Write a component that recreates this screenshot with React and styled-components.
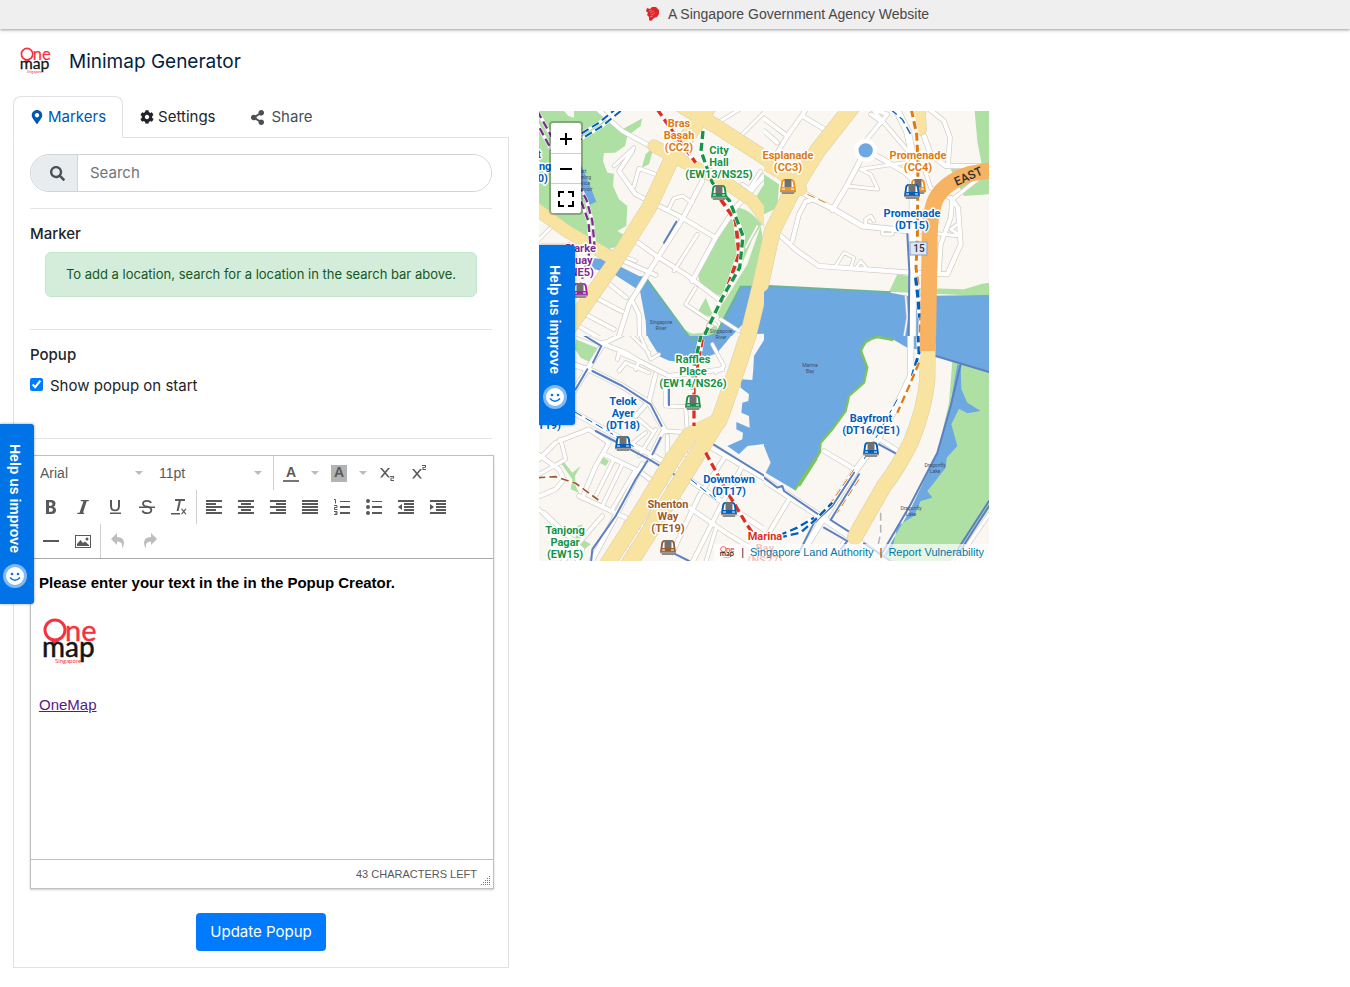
import React, { useState } from "react";
import styled, { createGlobalStyle } from "styled-components";
import { FaMapMarkerAlt, FaCog, FaShareAlt, FaSearch } from "react-icons/fa";

const GlobalStyle = createGlobalStyle`
  *, *::before, *::after {
    box-sizing: border-box;
  }

  body {
    margin: 0;
    background: #fff;
    color: #212529;
    font-family: Inter, "Liberation Sans", sans-serif;
    font-size: 15px;
    line-height: 24px;
  }
`;

/* ---------- map data ---------- */

const WATER = "#6ea8e0";
const PARK = "#aee0a4";
const YELLOW = "#f8e3a1";
const ORANGE = "#f7b262";
const BLUE_LINE = "#5d80c0";

const LINES = {
  red: "#dc3023",
  green: "#159447",
  blue: "#005ebd",
  orange: "#e07a10",
  purple: "#7b2d8e",
  brown: "#9b5a2e",
};

// Every tile is drawn on its own 675 unit grid
const tiles = [
  {
    id: "nw",
    x: 0,
    y: 0,
    parks: [
      "M0 0H180L250 55 310 22 305 45 265 75 258 105 228 125 195 126 192 150 205 185 225 188 222 225 240 265 265 285 262 345 235 360 265 378 262 400 185 420 0 300Z",
      "M345 105 330 160 308 170 320 130Z",
      "M590 290 480 470Q468 515 510 540L545 555 600 480 640 385 668 340Q630 290 590 290Z",
      "M640 275 675 220V320Z",
      "M665 345 625 460 560 565 535 600 545 640 605 528H645L675 400Z",
      "M475 605 500 560 525 620Z",
      "M425 650 460 668 500 665 530 640 540 665 485 690H450Z",
    ],
    land: ["M75 0H105V20L88 15Z"],
    water: [
      "M110 135 135 180 172 272 145 285 122 235 105 200Z",
      "M150 440 200 445 300 495 318 497 456 690H323L320 630 303 540 225 490 150 470Z",
      "M483 690 533 665 553 627 605 527H645V610L603 648 565 690Z",
      "M640 525H690V668L650 669Z",
    ],
    shore: ["M318 497 455 684M483 688 533 667 553 627 605 527H640"],
    major: [
      ["M-20 285 75 355 225 445", 36, YELLOW],
      ["M420 -20 530 45 700 155", 42, YELLOW],
      ["M345 105 420 145 560 215 640 270 690 335", 36, YELLOW],
      ["M515 -20 400 140 330 290 230 450 90 650", 44, YELLOW],
      ["M700 360 665 520 629 667 625 690", 47, YELLOW],
    ],
    roads: [
      ["M170 -10 250 60 350 115", 12],
      ["M280 120 240 180 290 250 360 285 430 320 530 380", 12],
      ["M225 165 285 110", 9],
      ["M285 225 300 172 350 190", 10],
      ["M390 292 405 262 430 255 460 275", 9],
      ["M490 210 430 325 350 450 270 580 235 690", 13],
      ["M675 195 590 290 530 380 460 510", 13],
      ["M475 370 405 480", 9],
      ["M290 390 360 440 440 490 540 565", 12],
      ["M255 450 350 492", 12],
      ["M545 30 610 -10M530 45 600 80 690 -10", 9],
      ["M620 250 665 180M640 240 610 220", 9],
      ["M470 530 440 580 530 640", 9],
      ["M200 510 262 560M170 560 250 602M130 605 225 655M110 640 180 680", 11],
      ["M280 570 300 610 302 690", 11],
      ["M0 385 45 340M90 400 55 430", 9],
      ["M545 625 600 660M215 420 290 450", 9],
      ["M655 345 620 410", 5],
    ],
    blue: ["M412 332 375 395"],
    rail: [
      ["M355 -5 400 60 470 155", LINES.red, 10],
      ["M545 265 590 330 600 430 560 545 510 640 488 690", LINES.red, 11],
      ["M492 60 486 120 520 215 572 270 612 375 602 470 550 560 500 665 490 690", LINES.green, 10],
      ["M-15 20 50 140 130 280 148 330 155 410 125 520", LINES.purple, 7],
      ["M-5 0 62 120 142 265 160 330 167 410", LINES.purple, 7],
      ["M235 -10 180 35 115 75M245 0 190 45 125 85", LINES.blue, 6],
    ],
  },
  {
    id: "ne",
    x: 225,
    y: 0,
    parks: [
      "M0 190 45 220 40 290 0 310Z",
      "M632 0H675V165L655 170 640 90Z",
      "M560 175 675 160V250L600 255Z",
      "M400 490 435 495 450 530 600 535 655 518 675 515V556L375 542Z",
    ],
    land: [],
    water: ["M0 524 380 545 430 555 675 552V675H0Z"],
    shore: ["M0 524 380 544"],
    major: [
      ["M-30 140 50 185 110 235", 36, YELLOW],
      ["M465 -20 470 55", 34, YELLOW],
      ["M270 -20 160 120 80 250 25 360 -10 520", 47, YELLOW],
    ],
    roads: [
      ["M-10 15 70 75 130 -10M70 75 40 125M115 15 190 60M0 60 40 95", 12],
      ["M305 90 370 10 325 -5M320 10 350 30M330 0 440 130", 11],
      ["M400 0 430 60 447 140 445 690", 20],
      ["M330 130 420 182 445 205M290 145 250 222 205 297", 14],
      ["M250 225 342 235 320 190 290 175 420 155", 9],
      ["M108 240 150 265 210 295 295 345 435 360", 15],
      ["M435 360 590 375 560 355 580 340", 9],
      ["M305 340 305 325 320 315 330 330", 9],
      ["M355 355 355 370 385 370 388 350", 8],
      ["M150 265 125 272 105 310 85 390", 12],
      ["M45 370 100 420 165 465 440 485 550 490 590 400 582 290 560 260", 13],
      ["M480 75 500 130 545 165 650 165", 14],
      ["M490 -10 540 30 558 80 552 160", 12],
      ["M480 170 500 230 565 265 660 190", 10],
      ["M565 265 560 320 530 400 525 480", 12],
      ["M215 465 240 425 270 440 262 465M280 465 290 450 305 468", 8],
      ["M425 555 430 620 420 680", 3],
    ],
    blue: ["M430 370 436 480 434 690"],
    rail: [
      ["M442 -5 458 70 462 150 460 380 456 470 462 520 470 620 468 690", LINES.orange, 9],
      ["M380 -5 415 25 440 70", LINES.blue, 4],
      ["M455 500 462 560 467 620", LINES.blue, 10],
      ["M130 250 185 275", LINES.orange, 3],
    ],
    express: [["M700 175 620 188Q540 215 515 265 495 310 497 400L492 690", 48, ORANGE]],
    pond: [305, 118, 21],
  },
  {
    id: "sw",
    x: 0,
    y: 225,
    parks: [
      "M110 10 180 38 160 82 125 65 108 40Z",
      "M190 362 210 375 200 390 182 380Z",
      "M70 372 100 410 125 390 108 420 110 450 120 470 95 460 100 430 65 380Z",
      "M115 570 130 565 130 610 155 625 130 645 105 635Z",
      "M450 -5H500L490 12 465 12Z",
      "M605 410 615 425 590 450 575 490 555 488 570 430Z",
    ],
    land: [],
    water: [
      "M323 -5 333 14 363 62 390 74 423 78 480 72 533 52 560 20 580 -5Z",
      "M690 -10 675 12 645 60 643 98 640 132 605 130 605 155 630 175 628 195 610 200 607 230 630 240 632 275 592 258 592 280 612 290 610 310 565 330 600 355 625 330 690 322Z",
    ],
    shore: ["M452 5Q470 16 488 8"],
    major: [
      ["M633 -20 590 110 545 240 500 315 440 410 330 590 260 700", 48, YELLOW],
      ["M540 255 450 298 400 370 310 520 195 700", 46, YELLOW],
    ],
    roads: [
      ["M105 -10 260 50 300 75 390 120 550 100M190 25 250 -5", 12],
      ["M235 70 240 50 300 75 290 100M240 105 260 80 330 110", 10],
      ["M270 -10 330 50M300 -10 335 70 360 55", 8],
      ["M110 88 160 105 250 150 330 200 378 285", 15],
      ["M350 115 330 195 290 240", 12],
      ["M105 165 145 100 195 20", 14],
      ["M380 130 380 210 440 212 445 290", 10],
      ["M520 25 555 90 530 110", 9],
      ["M105 230 250 310 400 390 470 445 690 590", 14],
      ["M60 315 150 280 210 320 170 390 130 485", 12],
      ["M-10 350 60 400 75 430 50 460 -10 485M0 370 50 320", 12],
      ["M0 415 80 370 65 310", 10],
      ["M120 480 260 545 350 590", 12],
      ["M195 355 300 405 400 480 560 590 690 670", 12],
      ["M250 385 190 510M290 400 220 520M225 370 170 480", 10],
      ["M310 385 230 540 150 690", 14],
      ["M370 290 330 370M378 285 445 290M385 300 385 365M430 345 465 375", 11],
      ["M300 360 350 280M270 330 320 290M300 250 340 285", 9],
      ["M500 325 690 435", 13],
      ["M560 360 480 480 400 650M610 390 540 520 460 680", 12],
      ["M260 560 320 600M240 620 300 660M380 450 260 690", 9],
      ["M15 530 130 640 110 690M60 690 190 540", 11],
      ["M0 520 40 560M530 580 500 680", 10],
    ],
    blue: [
      "M130 -5 187 30 162 80",
      "M160 105 250 150 335 205 368 270",
      "M145 100 110 160M365 305 340 355",
      "M170 285 330 370 410 418",
      "M325 375 290 430 230 540 160 640 155 690",
      "M515 320 690 428",
      "M390 160 390 208",
      "M400 650 450 675",
    ],
    rail: [
      ["M490 10 475 90 465 150 465 270M500 350 560 460 620 560 640 590", LINES.red, 10],
      ["M487 -5 465 90 458 170", LINES.green, 10],
      ["M-5 425 50 422 110 442 178 492", LINES.brown, 5],
      ["M108 228 290 335M455 430 530 490", LINES.blue, 3],
    ],
  },
  {
    id: "se",
    x: 225,
    y: 225,
    parks: ["M565 75 690 112V500L560 675H350L440 520 520 350 555 200Z"],
    land: ["M690 515 590 675H690Z"],
    water: [
      "M0 0H345L310 15 292 45 310 95 300 140 255 180 245 225 205 280 170 320 165 360 92 462 5 410 20 380 0 330Z",
      "M340 0 390 12 430 35 470 42 520 60 675 108V0Z",
      "M580 85 590 88 592 160 610 200 650 225 610 232 585 218 562 265 580 330 548 365 545 395 510 440 490 465 505 485 470 495 450 540 400 570 385 640 350 675 440 520 520 350 560 200Z",
    ],
    major: [["M491 25 490 130Q482 220 440 320 400 400 360 450L273 602", 45, YELLOW]],
    roads: [
      ["M-10 425 190 555 390 690", 18],
      ["M75 490 15 590M180 345 275 402M345 308 402 345", 12],
      ["M440 -10 440 120 390 225 330 330 270 410 170 560 90 690", 17],
      ["M240 620 210 680", 14],
      ["M675 535 575 680", 10],
    ],
    blue: [
      "M515 60 675 108",
      "M590 85 560 210 520 350 440 505 355 650",
      "M345 325 400 355",
      "M0 425 40 455 55 450 60 465 170 540",
      "M270 410 205 510 150 560 105 650",
      "M285 415 200 552 255 587",
      "M180 575 250 615 230 640",
      "M300 622 380 675",
      "M675 495 575 650M675 510 585 650",
    ],
    coast: ["M340 3 388 12M340 3Q300 10 291 45L310 95 300 140 255 180 245 225 205 280 170 320 167 350 92 462M158 368 105 450"],
    rail: [
      ["M462 -5 465 50 445 120", LINES.blue, 9],
      ["M465 80 440 140 400 230", LINES.orange, 7],
      ["M400 190 300 370", LINES.blue, 3],
      ["M270 400 205 495M285 430 220 530", LINES.orange, 3],
      ["M45 605 110 590 155 550 205 500M45 598 100 575 150 545", LINES.blue, 7],
      ["M350 530V590L340 640", "#b5b5b5", 5],
    ],
    express: [["M492 -20 491 45", 48, ORANGE, "butt"]],
  },
];

const stations = [
  { x: 180, y: 81, color: LINES.green },
  { x: 41, y: 179, color: "#a51fb0" },
  { x: 249, y: 75, color: "#f2941e" },
  { x: 379, y: 75, color: "#f2941e" },
  { x: 373, y: 80, color: LINES.blue },
  { x: 332, y: 338, color: LINES.blue },
  { x: 154, y: 291, color: LINES.green },
  { x: 84, y: 332, color: LINES.blue },
  { x: 190, y: 398, color: LINES.blue },
  { x: 129, y: 436, color: LINES.brown },
];

const placeLabels = [
  { x: 140, y: 16, color: LINES.orange, lines: ["Bras", "Basah", "(CC2)"] },
  { x: 180, y: 43, color: LINES.green, lines: ["City", "Hall", "(EW13/NS25)"] },
  { x: 249, y: 48, color: LINES.orange, lines: ["Esplanade", "(CC3)"] },
  { x: 379, y: 48, color: LINES.orange, lines: ["Promenade", "(CC4)"] },
  { x: 373, y: 106, color: LINES.blue, lines: ["Promenade", "(DT15)"] },
  { x: -8, y: 47, color: LINES.blue, lines: ["Fort", "Canning", "(DT20)"] },
  { x: 41, y: 141, color: LINES.purple, lines: ["Clarke", "Quay", "(NE5)"] },
  { x: 154, y: 252, color: LINES.green, lines: ["Raffles", "Place", "(EW14/NS26)"] },
  { x: 84, y: 294, color: LINES.blue, lines: ["Telok", "Ayer", "(DT18)"] },
  { x: 5, y: 318, color: LINES.blue, lines: ["(DT19)"] },
  { x: 190, y: 372, color: LINES.blue, lines: ["Downtown", "(DT17)"] },
  { x: 129, y: 397, color: LINES.brown, lines: ["Shenton", "Way", "(TE19)"] },
  { x: 26, y: 423, color: LINES.green, lines: ["Tanjong", "Pagar", "(EW15)"] },
  { x: 226, y: 429, color: LINES.red, lines: ["Marina", "Bay", "(NS27)"] },
  { x: 332, y: 311, color: LINES.blue, lines: ["Bayfront", "(DT16/CE1)"] },
];

const waterLabels = [
  { x: 122, y: 213, lines: ["Singapore", "River"] },
  { x: 182, y: 222, lines: ["Singapore", "River"] },
  { x: 271, y: 256, lines: ["Marina", "Bay"] },
  { x: 396, y: 356, lines: ["Dragonfly", "Lake"] },
  { x: 372, y: 399, lines: ["Dragonfly", "Lake"] },
  { x: 43, y: 62, lines: ["Fort", "Canning", "Service", "Reservoir"] },
];

/* ---------- drawings ---------- */

const OneMapLogo = ({ size }) => (
  <svg width={size} height={size} viewBox="0 0 60 60" role="img" aria-label="OneMap logo">
    <circle cx="16" cy="16" r="10" fill="none" stroke="#f5333f" strokeWidth="3" />
    <path d="M9 23 16 32 23 23Q16 28 9 23Z" fill="#f5333f" />
    <text x="26" y="27" fontFamily="Lato" fontSize="29" fill="#f5333f" stroke="#f5333f" strokeWidth="0.4">ne</text>
    <text x="3" y="43" fontFamily="Lato" fontSize="28" fill="#151515" stroke="#151515" strokeWidth="0.5">map</text>
    <text x="16" y="49" fontFamily="Lato" fontSize="6" fill="#f5333f">Singapore</text>
  </svg>
);

const LionIcon = () => (
  <svg width="14" height="16" viewBox="0 0 14 16" aria-hidden="true">
    <path
      d="M1 2 4 3 6 1 10 1 13 4 13 8 11 11 8 12 5 15 3 14 3 11 1 9 2 7 0 5Z"
      fill="#e0242b"
    />
    <path d="M3 5 6 4M4 7 8 5M5 9 9 7M4 11 7 10" stroke="#f08a8a" strokeWidth="0.7" fill="none" />
  </svg>
);

const SmileIcon = () => (
  <svg width="24" height="24" viewBox="0 0 24 24" aria-hidden="true">
    <circle cx="12" cy="12" r="12" fill="#fff" fillOpacity="0.5" />
    <circle cx="12" cy="12" r="9" fill="#fff" />
    <circle cx="9" cy="10" r="1.3" fill="#0073e6" />
    <circle cx="15" cy="10" r="1.3" fill="#0073e6" />
    <path d="M7 13.5Q12 19 17 13.5" fill="none" stroke="#0073e6" strokeWidth="1.5" />
  </svg>
);

const Train = ({ x, y, color }) => (
  <g transform={`translate(${x - 8} ${y - 7})`}>
    <path d="M1 11 2 15H14L15 11Z" fill="#8a8a8a" />
    <path d="M0 12 1 5Q1 0 5 0H11Q15 0 15 5L16 12Z" fill={color} />
    <path d="M2.500 8 3 4Q3 1.500 5 1.500H11Q13 1.500 13 4L13.500 8Z" fill="#fff" />
    <path d="M4.500 0H11.500V8H4.500Z" fill="#707070" />
    <path d="M2 10H5M11 10H14" stroke="#fff" />
    <path d="M0 12.500H16" stroke="#9a9a9a" strokeWidth="1.5" />
  </g>
);

const Tile = ({ x, y, parks, land, water, major, roads, blue, rail, coast = [], shore = [], express = [], pond }) => (
  <svg x={x} y={y} width="225" height="225" viewBox="0 0 675 675" fill="none">
    {parks.map((d) => <path key={d} d={d} fill={PARK} />)}
    {land.map((d) => <path key={d} d={d} fill="#faf7f2" />)}
    {water.map((d) => <path key={d} d={d} fill={WATER} />)}
    {coast.map((d) => <path key={d} d={d} stroke="#7fc35c" strokeWidth="7" />)}
    {shore.map((d) => <path key={d} d={d} stroke="#68b59c" strokeWidth="6" />)}
    <g strokeLinejoin="round" strokeLinecap="round">
      {roads.map(([d, w]) => <path key={d} d={d} stroke="#cfcbc5" strokeWidth={w + 4} />)}
      {roads.map(([d, w]) => <path key={d} d={d} stroke="#fff" strokeWidth={w} />)}
      {blue.map((d) => <path key={d} d={d} stroke={BLUE_LINE} strokeWidth="6" />)}
      {major.map(([d, w]) => <path key={d} d={d} stroke="#dccfa6" strokeWidth={w + 3} />)}
      {major.map(([d, w, c]) => <path key={d} d={d} stroke={c} strokeWidth={w} />)}
      {pond && <circle cx={pond[0]} cy={pond[1]} r={pond[2] + 7} fill={WATER} stroke="#fff" strokeWidth="13" />}
    </g>
    {rail.map(([d, c, w]) => (
      <g key={d}>
        <path d={d} stroke="#fff" strokeWidth={w + 3} />
        <path d={d} stroke={c} strokeWidth={w} strokeDasharray="24 12" />
      </g>
    ))}
    {express.map(([d, w, c, cap]) => (
      <path key={d} d={d} stroke={c} strokeWidth={w} strokeLinecap={cap || "round"} />
    ))}
  </svg>
);

const MapCanvas = () => (
  <MapDrawing viewBox="0 0 450 450" role="img" aria-label="Map of Marina Bay">
    <rect width="450" height="450" fill="#faf7f2" />
    {tiles.map((tile) => <Tile key={tile.id} {...tile} />)}
    {stations.map((s) => <Train key={`${s.x}-${s.y}`} {...s} />)}
    {waterLabels.map(({ x, y, lines }) => (
      <WaterLabel key={`${x}-${y}`}>
        {lines.map((line, i) => <tspan key={line} x={x} y={y + i * 6}>{line}</tspan>)}
      </WaterLabel>
    ))}
    {placeLabels.map(({ x, y, color, lines }) => (
      <PlaceLabel key={`${x}-${y}`} $color={color}>
        {lines.map((line, i) => <tspan key={line} x={x} y={y + i * 12}>{line}</tspan>)}
      </PlaceLabel>
    ))}
    <rect x="371" y="131" width="17" height="13" fill="#dde6f7" stroke="#8f9db8" />
    <RoadLabel x="380" y="141">15</RoadLabel>
    <RoadLabel $large transform="translate(431 69) rotate(-24)">EAST</RoadLabel>
  </MapDrawing>
);

/* ---------- editor icons, 16px grid ---------- */

const barIcon = (rows) => (
  <path d={rows.map(([x, w], i) => `M${x} ${i * 3 + 1}h${w}v2h-${w}z`).join("")} shapeRendering="crispEdges" />
);

const icons = {
  bold: <path fillRule="evenodd" d="M3 1H8Q12.500 1 12.500 4.500 12.500 7 10.500 7.700 13 8.500 13 11 13 15 8.500 15H3ZM6 3.300V6.700H7.800Q9.500 6.700 9.500 5 9.500 3.300 7.800 3.300ZM6 9V12.700H8Q10 12.700 10 10.800 10 9 8 9Z" />,
  italic: <path d="M6 1H14L13.500 2.300H11.700L8 13.700H9.500L9 15H2L2.500 13.700H4.500L8.500 2.300H5.500Z" />,
  underline: <path d="M3 1H5V7Q5 10.500 8 10.500 11 10.500 11 7V1H13V7Q13 12.300 8 12.300 3 12.300 3 7ZM3 13.500H14V15H3Z" />,
  strike: (
    <>
      <path d="M12 4Q11.500 1.800 8 1.800 4 1.800 4 4.500 4 7 8 7.700 12.300 8.500 12.300 11 12.300 14.200 8 14.200 4 14.200 3.500 11.500" fill="none" stroke="currentColor" strokeWidth="1.8" />
      <path d="M0 7.500H16V9H0Z" />
    </>
  ),
  clear: <path d="M4 0H14V2H9.800L7.600 12H5.600L7.800 2H4ZM0 14H9V15.500H0ZM10 10 11 9.500 12.700 11.500 14.500 9.500 15.500 10 13.500 12.500 15.500 15 14.500 15.500 12.700 13.500 11 15.500 10 15 12 12.500Z" />,
  left: barIcon([[0, 16], [0, 10], [0, 16], [0, 10], [0, 16]]),
  center: barIcon([[0, 16], [3, 10], [0, 16], [3, 10], [0, 16]]),
  right: barIcon([[0, 16], [6, 10], [0, 16], [6, 10], [0, 16]]),
  justify: barIcon([[0, 16], [0, 16], [0, 16], [0, 16], [0, 16]]),
  numbered: (
    <>
      <path d="M6 2h10v1H6zM6 7h10v2H6zM6 13h10v2H6z" shapeRendering="crispEdges" />
      <path d="M0 .5H1.500V4.500M0 6.500H3V8.500H.500V10.500H3.500M0 12.500H3V15.500H0M1 14H3" fill="none" stroke="currentColor" />
    </>
  ),
  bullets: (
    <>
      <path d="M6 2h10v1H6zM6 7h10v2H6zM6 13h10v2H6z" shapeRendering="crispEdges" />
      <circle cx="2" cy="2" r="2" />
      <circle cx="2" cy="8" r="2" />
      <circle cx="2" cy="14" r="2" />
    </>
  ),
  outdent: (
    <>
      {barIcon([[0, 16], [6, 10], [6, 10], [6, 10], [0, 16]])}
      <path d="M4 5V11L0 8Z" />
    </>
  ),
  indent: (
    <>
      {barIcon([[0, 16], [6, 10], [6, 10], [6, 10], [0, 16]])}
      <path d="M0 5V11L4 8Z" />
    </>
  ),
  rule: <path d="M0 7h16v2H0z" />,
  image: <path fillRule="evenodd" d="M0 2H16V15H0ZM1 3V14H15V3ZM2 13V11L5.500 7 8 10 10 8.500 14 12V13ZM12 4.500A1.500 1.500 0 1 0 12 7.500 1.500 1.500 0 0 0 12 4.500Z" />,
  undo: <path d="M1 6 7 0V4Q14 4 14 10 14 13 12 15.500 13.500 8.500 7 8.500V12Z" />,
  redo: <path d="M15 6 9 0V4Q2 4 2 10 2 13 4 15.500 2.500 8.500 9 8.500V12Z" />,
  sub: <path d="M1 3H3L6 6.500 9 3H11L7 7.700 11 12.500H9L6 9 3 12.500H1L5 7.700ZM11 11H15V13.500H12.500V15H15V16H11.500V12.700H14V12H11Z" />,
  sup: <path d="M1 4H3L6 7.500 9 4H11L7 8.700 11 13.500H9L6 10 3 13.500H1L5 8.700ZM11 0H15V2.800H12.500V4H15V5H11.500V2H14V1H11Z" />,
};

const formatTools = [
  ["bold", "Bold"],
  ["italic", "Italic"],
  ["underline", "Underline"],
  ["strike", "Strikethrough"],
  ["clear", "Clear formatting"],
];

const paragraphTools = [
  ["left", "Align left"],
  ["center", "Align center"],
  ["right", "Align right"],
  ["justify", "Justify"],
  ["numbered", "Numbered list"],
  ["bullets", "Bullet list"],
  ["outdent", "Decrease indent"],
  ["indent", "Increase indent"],
];

const Icon = ({ name }) => (
  <svg width="16" height="16" viewBox="0 0 16 16" fill="currentColor" aria-hidden="true">{icons[name]}</svg>
);

const Caret = () => (
  <svg width="8" height="4" viewBox="0 0 8 4" aria-hidden="true">
    <path d="M0 0H8L4 4Z" fill="#b5bcc2" />
  </svg>
);

const ToolButtons = ({ tools, disabled }) =>
  tools.map(([name, label]) => (
    <ToolButton key={name} type="button" aria-label={label} disabled={disabled}>
      <Icon name={name} />
    </ToolButton>
  ));

const HelpTab = ({ inMap }) => (
  <HelpButton type="button" $inMap={inMap}>
    <span>Help us improve</span>
    <SmileIcon />
  </HelpButton>
);

const Editor = () => (
  <EditorBox>
    <Toolbar>
      <ToolRow>
        <ToolGroup $spaced>
          <SelectBox>
            <select aria-label="Font family" defaultValue="Arial">
              <option>Arial</option>
              <option>Georgia</option>
            </select>
            <Caret />
          </SelectBox>
          <SelectBox>
            <select aria-label="Font size" defaultValue="11pt">
              <option>11pt</option>
              <option>12pt</option>
            </select>
            <Caret />
          </SelectBox>
        </ToolGroup>
        <ToolGroup $spaced>
          <SplitTool>
            <ToolButton type="button" aria-label="Text color"><ColorLetter>A</ColorLetter></ToolButton>
            <CaretButton type="button" aria-label="Pick text color"><Caret /></CaretButton>
          </SplitTool>
          <SplitTool>
            <ToolButton type="button" aria-label="Background color"><ColorLetter $filled>A</ColorLetter></ToolButton>
            <CaretButton type="button" aria-label="Pick background color"><Caret /></CaretButton>
          </SplitTool>
          <SplitTool>
            <ToolButtons tools={[["sub", "Subscript"], ["sup", "Superscript"]]} />
          </SplitTool>
        </ToolGroup>
      </ToolRow>
      <ToolRow>
        <ToolGroup><ToolButtons tools={formatTools} /></ToolGroup>
        <ToolGroup><ToolButtons tools={paragraphTools} /></ToolGroup>
      </ToolRow>
      <ToolRow>
        <ToolGroup><ToolButtons tools={[["rule", "Horizontal line"], ["image", "Insert image"]]} /></ToolGroup>
        <ToolGroup><ToolButtons tools={[["undo", "Undo"], ["redo", "Redo"]]} disabled /></ToolGroup>
      </ToolRow>
    </Toolbar>
    <EditArea role="textbox" aria-label="Popup text" aria-multiline="true" contentEditable suppressContentEditableWarning spellCheck={false}>
      <p><strong>Please enter your text in the in the Popup Creator.</strong></p>
      <p><OneMapLogo size={60} /></p>
      <p><a href="#onemap">OneMap</a></p>
    </EditArea>
    <StatusBar>
      <span>43 CHARACTERS LEFT</span>
      <svg width="10" height="10" viewBox="0 0 10 10" aria-hidden="true">
        <path
          d="M8 1h2M6 3h4M4 5h6M2 7h8M0 9h10"
          stroke="#777"
          strokeDasharray="1 1"
          shapeRendering="crispEdges"
        />
      </svg>
    </StatusBar>
  </EditorBox>
);

const App = () => {
  const [showPopup, setShowPopup] = useState(true);

  return (
    <>
      <GlobalStyle />
      <TopBar>
        <TopBarText>
          <LionIcon />
          <span>A Singapore Government Agency Website</span>
        </TopBarText>
      </TopBar>
      <HelpTab />
      <Header>
        <OneMapLogo size={34} />
        <h1>Minimap Generator</h1>
      </Header>
      <Main>
        <section>
          <Tabs>
            <Tab href="#markers" $active><FaMapMarkerAlt size={14} /> Markers</Tab>
            <Tab href="#settings" $dark><FaCog size={14} /> Settings</Tab>
            <Tab href="#share" $wide><FaShareAlt size={15} /> Share</Tab>
          </Tabs>
          <Panel>
            <SearchBar>
              <label htmlFor="search"><FaSearch size={15} title="Search" /></label>
              <input id="search" type="text" placeholder="Search" />
            </SearchBar>
            <Divider />
            <SectionTitle>Marker</SectionTitle>
            <Notice>To add a location, search for a location in the search bar above.</Notice>
            <Divider />
            <SectionTitle>Popup</SectionTitle>
            <CheckLabel>
              <input type="checkbox" checked={showPopup} onChange={(e) => setShowPopup(e.target.checked)} />
              Show popup on start
            </CheckLabel>
            <Divider />
            <Editor />
            <UpdateButton type="button">Update Popup</UpdateButton>
          </Panel>
        </section>
        <MapFrame>
          <MapCanvas />
          <HelpTab inMap />
          <ZoomControl>
            <button type="button" aria-label="Zoom in">
              <svg width="12" height="12" viewBox="0 0 12 12"><path d="M5 0h2v5h5v2H7v5H5V7H0V5h5z" /></svg>
            </button>
            <button type="button" aria-label="Zoom out">
              <svg width="12" height="12" viewBox="0 0 12 12"><path d="M0 5h12v2H0z" /></svg>
            </button>
            <button type="button" aria-label="Full screen">
              <svg width="16" height="16" viewBox="0 0 16 16">
                <path d="M1 6V1H6M10 1H15V6M15 10V15H10M6 15H1V10" fill="none" stroke="#000" strokeWidth="2" />
              </svg>
            </button>
          </ZoomControl>
          <Attribution>
            <OneMapLogo size={16} />
            <span>|</span>
            <a href="#sla">Singapore Land Authority</a>
            <span>|</span>
            <a href="#report">Report Vulnerability</a>
          </Attribution>
        </MapFrame>
      </Main>
    </>
  );
};

/* ---------- styles ---------- */

const TopBar = styled.div`
  display: grid;
  grid-template-columns: 2fr 10fr;
  height: 29px;
  padding-bottom: 2px;
  background: #efefef;
  box-shadow: 0 1px 3px rgba(0, 0, 0, 0.4);
`;

const TopBarText = styled.div`
  grid-column: 2;
  display: flex;
  align-items: center;
  justify-content: center;
  gap: 8px;
  color: #484848;
  font-family: "Liberation Sans", Arial, sans-serif;
  font-size: 14px;
`;

const Header = styled.header`
  display: flex;
  align-items: center;
  gap: 17px;
  height: 67px;
  padding: 0 18px 2px;

  h1 {
    margin: 0;
    color: #041e42;
    font-size: 19px;
    font-weight: 400;
  }
`;

const Main = styled.main`
  display: grid;
  grid-template-columns: minmax(0, 496px) minmax(0, 450px);
  align-items: start;
  gap: 30px;
  padding: 0 13px 19px;
`;

const Tabs = styled.nav`
  display: flex;
`;

const Tab = styled.a`
  position: relative;
  display: flex;
  align-items: center;
  gap: ${({ $wide }) => ($wide ? "7px" : "4px")};
  height: 42px;
  margin-bottom: -1px;
  padding: 0 16px;
  border: 1px solid;
  border-color: ${({ $active }) => ($active ? "#dee2e6 #dee2e6 #fff" : "transparent")};
  border-radius: 8px 8px 0 0;
  background: ${({ $active }) => ($active ? "#fff" : "none")};
  color: ${({ $active, $dark }) => ($active ? "#0056b3" : $dark ? "#212529" : "#495057")};
  text-decoration: none;
`;

const Panel = styled.div`
  padding: 16px;
  border: 1px solid #dee2e6;
`;

const SearchBar = styled.div`
  display: flex;
  height: 38px;
  border: 1px solid #ced4da;
  border-radius: 19px;
  overflow: hidden;

  label {
    display: flex;
    align-items: center;
    justify-content: center;
    width: 47px;
    padding-left: 7px;
    border-right: 1px solid #ced4da;
    background: #e9ecef;
    color: #495057;
  }

  input {
    flex: 1;
    min-width: 0;
    padding: 0 12px;
    border: 0;
    outline: 0;
    font: inherit;
  }

  input::placeholder {
    color: #6c757d;
  }
`;

const Divider = styled.hr`
  margin: 16px 0 13px;
  border: 0;
  border-top: 1px solid #e3e4e5;
`;

const SectionTitle = styled.h2`
  margin: 0;
  font-size: 15px;
  font-weight: 500;
`;

const Notice = styled.div`
  margin: 6px 15px 32px;
  padding: 10px 12px;
  border: 1px solid #c3e6cb;
  border-radius: 6px;
  background: #d4edda;
  color: #155724;
  font-size: 13px;
  line-height: 23px;
  text-align: center;
`;

const CheckLabel = styled.label`
  display: flex;
  align-items: center;
  gap: 7px;
  margin: 7px 0 40px;

  input {
    width: 13px;
    height: 13px;
    margin: 0 0 3px;
    accent-color: #007bff;
  }
`;

const EditorBox = styled.div`
  margin: 16px -2px 24px 0;
  border: 1px solid #c0c0c0;
  box-shadow: 0 1px 2px rgba(0, 0, 0, 0.2);
  background: #fff;
  color: #595959;
  font-family: "Liberation Sans", Arial, sans-serif;
`;

const Toolbar = styled.div`
  border-bottom: 1px solid #a8a8a8;
`;

const ToolRow = styled.div`
  display: flex;
  height: 34px;
  padding-left: 3px;
`;

const ToolGroup = styled.div`
  display: flex;
  align-items: center;
  gap: ${({ $spaced }) => ($spaced ? "1px" : "0")};
  padding: 0 1px;

  & + & {
    border-left: 1px solid #d0d0d0;
  }
`;

const ToolButton = styled.button`
  display: flex;
  align-items: center;
  justify-content: center;
  width: 32px;
  height: 30px;
  padding: 0;
  border: 0;
  background: none;
  color: ${({ disabled }) => (disabled ? "#bdbdbd" : "#595959")};
  font-family: inherit;
`;

const CaretButton = styled(ToolButton)`
  width: 15px;
`;

const SplitTool = styled.div`
  display: flex;
`;

const ColorLetter = styled.span`
  width: 16px;
  border-bottom: 2px solid ${({ $filled }) => ($filled ? "#b3b3b3" : "#757575")};
  background: ${({ $filled }) => ($filled ? "#b3b3b3" : "none")};
  font-size: 14px;
  font-weight: 700;
  line-height: 15px;
`;

const SelectBox = styled.div`
  display: flex;
  align-items: center;
  width: 118px;
  padding: 0 10px 0 5px;

  select {
    flex: 1;
    min-width: 0;
    padding: 0;
    border: 0;
    appearance: none;
    background: none;
    color: #595959;
    font-family: inherit;
    font-size: 14px;
  }
`;

const EditArea = styled.div`
  height: 300px;
  padding: 14px 8px;
  outline: 0;
  color: #000;
  font-size: 15px;
  line-height: 20px;

  p {
    margin: 0;
  }

  p + p {
    margin-top: 21px;
  }

  a {
    color: #551a8b;
  }

  svg {
    display: block;
  }
`;

const StatusBar = styled.div`
  display: flex;
  align-items: center;
  justify-content: flex-end;
  gap: 4px;
  height: 29px;
  padding-right: 2px;
  border-top: 1px solid #c0c0c0;
  font-size: 11px;

  svg {
    align-self: flex-end;
    margin-bottom: 3px;
  }
`;

const UpdateButton = styled.button`
  display: block;
  height: 38px;
  margin: 0 auto;
  padding: 0 14px;
  border: 0;
  border-radius: 4px;
  background: #007bff;
  color: #fff;
  font: inherit;
`;

const HelpButton = styled.button`
  position: absolute;
  z-index: 5;
  top: ${({ $inMap }) => ($inMap ? "134px" : "424px")};
  left: 0;
  display: flex;
  flex-direction: column;
  align-items: center;
  justify-content: space-between;
  width: ${({ $inMap }) => ($inMap ? "36px" : "34px")};
  height: 180px;
  padding: 20px 7px 16px 3px;
  border: 0;
  border-radius: 0 3px 3px 0;
  background: #0073e6;
  box-shadow: 0 0 3px rgba(0, 0, 0, 0.4);
  color: #fff;
  font-family: "Liberation Sans", Arial, sans-serif;
  font-size: 14px;
  font-weight: 700;

  span {
    line-height: 20px;
    writing-mode: vertical-rl;
    white-space: nowrap;
  }
`;

const MapFrame = styled.section`
  position: relative;
  margin-top: 15px;
  overflow: hidden;
`;

const MapDrawing = styled.svg`
  display: block;
  width: 100%;
  height: auto;
`;

const PlaceLabel = styled.text`
  fill: ${({ $color }) => $color};
  stroke: #fff;
  stroke-width: 3px;
  stroke-linejoin: round;
  paint-order: stroke;
  font-family: Roboto, sans-serif;
  font-size: 11px;
  font-weight: 700;
  text-anchor: middle;
`;

const WaterLabel = styled.text`
  fill: #3c4f6b;
  font-family: Roboto, sans-serif;
  font-size: 5px;
  text-anchor: middle;
`;

const RoadLabel = styled.text`
  fill: #333;
  font-family: Roboto, sans-serif;
  font-size: ${({ $large }) => ($large ? "12px" : "10px")};
  font-weight: 500;
  text-anchor: middle;
`;

const ZoomControl = styled.div`
  position: absolute;
  top: 10px;
  left: 10px;
  border: 2px solid rgba(0, 0, 0, 0.25);
  border-radius: 4px;
  background: #fff;
  background-clip: padding-box;

  button {
    display: flex;
    align-items: center;
    justify-content: center;
    width: 30px;
    height: 30px;
    padding: 2px 0 0;
    border: 0;
    background: none;
  }

  button + button {
    padding: 0;
    border-top: 1px solid #ccc;
  }
`;

const Attribution = styled.div`
  position: absolute;
  right: 0;
  bottom: 0;
  display: flex;
  align-items: center;
  gap: 6px;
  height: 17px;
  padding: 0 5px;
  background: rgba(255, 255, 255, 0.7);
  color: #333;
  font-family: "Liberation Sans", Arial, sans-serif;
  font-size: 11px;
  line-height: 17px;

  a {
    color: #0078a8;
    text-decoration: none;
  }
`;

export default App;
